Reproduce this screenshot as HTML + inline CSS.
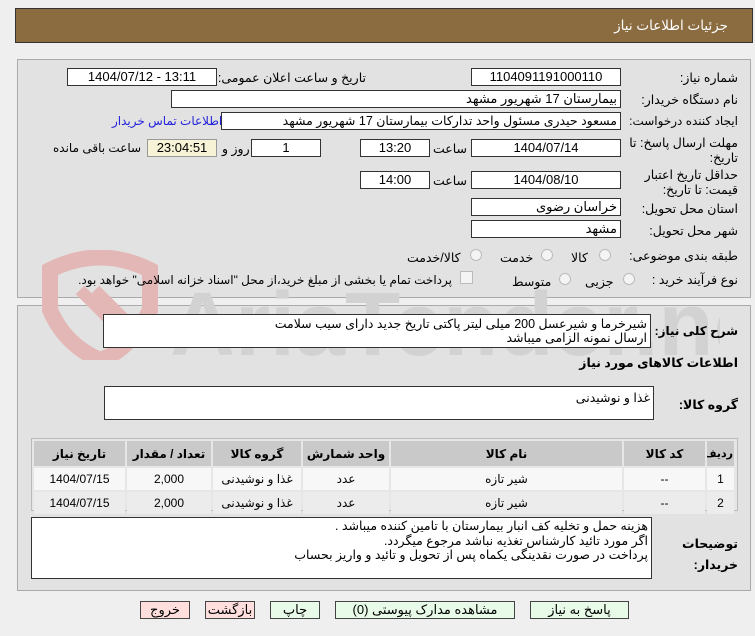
<!DOCTYPE html>
<html><head><meta charset="utf-8"><style>
body{margin:0;width:755px;height:636px;background:#efefef;font-family:"Liberation Sans","DejaVu Sans",sans-serif;font-size:12px;color:#000;position:relative;overflow:hidden}
.a{position:absolute}
.box{position:absolute;background:#fff;border:1px solid #333;box-sizing:border-box;text-align:center;font-size:13px;line-height:16px;white-space:nowrap;overflow:hidden}
.r{text-align:right;padding-right:3px}
.l{position:absolute;white-space:nowrap;direction:rtl;font-size:12.5px}
.b{font-weight:bold}
.rad{position:absolute;width:10px;height:10px;border:1px solid #bbb;border-radius:50%;background:#f4f4f4}
table{border-collapse:separate;border-spacing:2px;font-size:12px;table-layout:fixed}
td{text-align:center;height:20px;overflow:hidden;white-space:nowrap}
.btn{position:absolute;height:18px;border:1px solid #444;box-sizing:border-box;text-align:center;font-size:13px;line-height:16px;direction:rtl}
</style></head><body>
<div class="a" style="left:15px;top:8px;width:738px;height:35px;background:#8b6b40;border:1px solid #333;box-sizing:border-box"></div>
<div class="l" style="right:27px;top:18px;color:#fff;font-size:13.5px">جزئیات اطلاعات نیاز</div>

<div class="a" style="left:17px;top:59px;width:734px;height:239px;background:#e2e2e2;border:1px solid #aaa;box-sizing:border-box"></div>
<div class="a" style="left:17px;top:305px;width:734px;height:286px;background:#e2e2e2;border:1px solid #aaa;box-sizing:border-box"></div>

<svg class="a" style="left:20px;top:250px" width="700" height="110">
<path d="M30 20 Q80 -5 130 20 L130 60 Q110 100 80 110 Q45 95 30 60 Z" fill="none" stroke="#e4b7b7" stroke-width="16"/>
<path d="M60 40 L95 75 M75 40 L110 75" stroke="#e4b7b7" stroke-width="12"/>
<text x="150" y="105" font-size="90" font-weight="bold" fill="#d2d2d2" font-family="Liberation Sans">AriaTender.net</text>
</svg>

<div class="l" style="right:17px;top:70px">شماره نیاز:</div>
<div class="box" style="left:471px;top:68px;width:150px;height:18px">1104091191000110</div>
<div class="l" style="right:389px;top:70px">تاریخ و ساعت اعلان عمومی:</div>
<div class="box" style="left:67px;top:68px;width:150px;height:18px">1404/07/12 - 13:11</div>

<div class="l" style="right:17px;top:92px">نام دستگاه خریدار:</div>
<div class="box r" style="left:171px;top:90px;width:450px;height:18px;direction:rtl">بیمارستان 17 شهریور مشهد</div>

<div class="l" style="right:17px;top:114px;font-size:12px">ایجاد کننده درخواست:</div>
<div class="box r" style="left:221px;top:112px;width:400px;height:18px;direction:rtl;font-size:12.5px">مسعود حیدری مسئول واحد تدارکات  بیمارستان 17 شهریور مشهد</div>
<div class="l" style="left:112px;top:114px;color:#2222dd;font-size:12px">اطلاعات تماس خریدار</div>

<div class="l" style="right:17px;top:136px;line-height:15px;text-align:right">مهلت ارسال پاسخ: تا<br>تاریخ:</div>
<div class="box" style="left:471px;top:139px;width:150px;height:18px">1404/07/14</div>
<div class="l" style="left:433px;top:141px">ساعت</div>
<div class="box" style="left:360px;top:139px;width:70px;height:18px">13:20</div>
<div class="box" style="left:251px;top:139px;width:70px;height:18px">1</div>
<div class="l" style="left:222px;top:141px">روز و</div>
<div class="box" style="left:147px;top:139px;width:70px;height:18px;background:#f6f3d6;border-color:#999">23:04:51</div>
<div class="l" style="left:53px;top:141px;font-size:12px">ساعت باقی مانده</div>

<div class="l" style="right:17px;top:168px;line-height:15px;text-align:right">حداقل تاریخ اعتبار<br>قیمت: تا تاریخ:</div>
<div class="box" style="left:471px;top:171px;width:150px;height:18px">1404/08/10</div>
<div class="l" style="left:433px;top:173px">ساعت</div>
<div class="box" style="left:360px;top:171px;width:70px;height:18px">14:00</div>

<div class="l" style="right:17px;top:201px">استان محل تحویل:</div>
<div class="box r" style="left:471px;top:198px;width:150px;height:18px;direction:rtl">خراسان رضوی</div>
<div class="l" style="right:17px;top:223px">شهر محل تحویل:</div>
<div class="box r" style="left:471px;top:220px;width:150px;height:18px;direction:rtl">مشهد</div>

<div class="l" style="right:17px;top:248px">طبقه بندی موضوعی:</div>
<div class="rad" style="left:599px;top:249px"></div><div class="l" style="left:571px;top:250px">کالا</div>
<div class="rad" style="left:541px;top:249px"></div><div class="l" style="left:500px;top:250px">خدمت</div>
<div class="rad" style="left:470px;top:249px"></div><div class="l" style="left:407px;top:250px">کالا/خدمت</div>

<div class="l" style="right:17px;top:272px">نوع فرآیند خرید :</div>
<div class="rad" style="left:623px;top:273px"></div><div class="l" style="left:585px;top:274px">جزیی</div>
<div class="rad" style="left:559px;top:273px"></div><div class="l" style="left:512px;top:274px">متوسط</div>
<div class="a" style="left:460px;top:271px;width:11px;height:11px;border:1px solid #bbb;background:#f4f4f4"></div>
<div class="l" style="right:303px;top:273px;font-size:12px">پرداخت تمام یا بخشی از مبلغ خرید،از محل "اسناد خزانه اسلامی" خواهد بود.</div>

<div class="l b" style="right:17px;top:324px;font-size:12px">شرح کلی نیاز:</div>
<div class="box r" style="left:103px;top:314px;width:548px;height:34px;direction:rtl;text-align:right;line-height:14px;white-space:normal;padding-top:2px;font-size:12.5px">شیرخرما و شیرعسل 200 میلی لیتر پاکتی تاریخ جدید دارای سیب سلامت<br>ارسال نمونه الزامی میباشد</div>
<div class="l b" style="right:17px;top:355px">اطلاعات کالاهای مورد نیاز</div>

<div class="l b" style="right:17px;top:397px">گروه کالا:</div>
<div class="box r" style="left:104px;top:386px;width:550px;height:34px;direction:rtl;text-align:right;padding-top:3px;font-size:12.5px">غذا و نوشیدنی</div>

<div class="a" style="left:31px;top:438px;width:707px;height:73px;border:1px solid #bbb;box-sizing:border-box;background:#e6e6e6"></div>
<table class="a" style="left:32px;top:439px;width:704px;direction:rtl">
<colgroup><col style="width:27px"><col style="width:81px"><col style="width:231px"><col style="width:86px"><col style="width:88px"><col style="width:84px"><col></colgroup>
<tr style="background:#c9c9c9;font-weight:bold"><td style="height:23px;font-size:11px">ردیف</td><td>کد کالا</td><td>نام کالا</td><td>واحد شمارش</td><td>گروه کالا</td><td>تعداد / مقدار</td><td>تاریخ نیاز</td></tr>
<tr style="background:#f7f7f7"><td>1</td><td>--</td><td>شیر تازه</td><td>عدد</td><td>غذا و نوشیدنی</td><td>2,000</td><td>1404/07/15</td></tr>
<tr style="background:#ececec"><td>2</td><td>--</td><td>شیر تازه</td><td>عدد</td><td>غذا و نوشیدنی</td><td>2,000</td><td>1404/07/15</td></tr>
</table>

<div class="l b" style="right:17px;top:534px;line-height:21px;text-align:right">توضیحات<br>خریدار:</div>
<div class="box r" style="left:31px;top:517px;width:621px;height:62px;direction:rtl;text-align:right;line-height:14.5px;white-space:normal;padding-top:1px;font-size:12.5px">هزینه حمل و تخلیه کف انبار بیمارستان با تامین کننده میباشد .<br>اگر مورد تائید کارشناس تغذیه نباشد مرجوع میگردد.<br>پرداخت در صورت نقدینگی یکماه پس از تحویل و تائید و واریز بحساب</div>

<div class="btn" style="left:530px;top:601px;width:99px;background:#e8fbe8">پاسخ به نیاز</div>
<div class="btn" style="left:335px;top:601px;width:180px;background:#e8fbe8">مشاهده مدارک پیوستی (0)</div>
<div class="btn" style="left:270px;top:601px;width:50px;background:#e8fbe8">چاپ</div>
<div class="btn" style="left:205px;top:601px;width:50px;background:#ffdede">بازگشت</div>
<div class="btn" style="left:140px;top:601px;width:50px;background:#ffdede">خروج</div>
</body></html>
